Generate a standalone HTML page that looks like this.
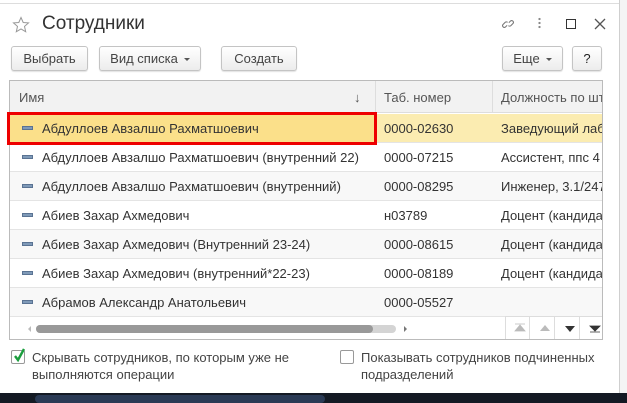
<!DOCTYPE html>
<html><head><meta charset="utf-8"><style>
*{box-sizing:border-box;margin:0;padding:0}
body{width:627px;height:403px;overflow:hidden;background:#fff;font-family:"Liberation Sans",Arial,sans-serif;position:relative;color:#333}
.bgr{position:absolute;left:619px;top:0;width:8px;height:393px;background:#f4f4f4;border-left:1px solid #cfcfcf}
.bot{position:absolute;left:0;top:393px;width:627px;height:10px;background:#141a24}
.bot i{position:absolute;left:35px;top:2px;width:290px;height:8px;background:#2a3a55;border-radius:6px}
.win{position:absolute;left:0;top:3px;width:619px;height:390px;background:#fff;border-top:1px solid #ddd}
.a{position:absolute}
.title{left:42px;top:9px;font-size:19px;color:#333}
.btn{position:absolute;top:46px;height:25px;border:1px solid #c4c4c4;border-radius:3px;background:linear-gradient(#fff,#ececec);font-size:13px;color:#444;text-align:center;line-height:23px;box-shadow:0 1px 1px rgba(0,0,0,.12)}
.tri{display:inline-block;border-left:3px solid transparent;border-right:3px solid transparent;border-top:3px solid #555;vertical-align:middle;margin-left:6px}
.tbl{position:absolute;left:9px;top:80px;width:594px;height:260px;border:1px solid #bbb;overflow:hidden}
.hdr{position:absolute;left:0;top:0;width:594px;height:32px;background:#f2f2f2;border-bottom:1px solid #ddd;font-size:13px;color:#555}
.hdr span{position:absolute;top:9px}
.vl{position:absolute;top:0;width:1px;height:32px;background:#ddd}
.row{position:absolute;left:0;width:594px;height:29px;border-bottom:1px solid #e4e4e4;font-size:13px;color:#333}
.row span{position:absolute;top:7px;white-space:nowrap}
.row i{position:absolute;left:12px;top:12px;width:11px;height:4px;background:#7f9ab8;border:1px solid #5a7393}
.sel{background:#fbecb1}
.sel .c1{position:absolute;left:0;top:0;width:365px;height:29px;background:#fbe08a}
.red{position:absolute;left:7px;top:112px;width:370px;height:33px;border:3px solid #e00}
.cb{position:absolute;width:14px;height:14px;border:1px solid #999;border-radius:2px;background:#fff}
.lbl{position:absolute;font-size:13px;color:#444;line-height:17px}
</style></head><body>
<div class="bgr"></div>
<div class="bot"><i></i></div>
<div class="win">
<svg class="a" style="left:12px;top:12px" width="18" height="18" viewBox="0 0 18 18"><path d="M9 1.5l2.2 5 5.3.4-4 3.5 1.2 5.3L9 12.9 4.3 15.7 5.5 10.4 1.5 6.9l5.3-.4z" fill="none" stroke="#999" stroke-width="1"/></svg>
<div class="a title">Сотрудники</div>
<svg class="a" style="left:501px;top:13px" width="14" height="14" viewBox="0 0 16 16"><g fill="none" stroke="#777" stroke-width="1.2"><path d="M7 9.5l-2 2a2 2 0 0 1-2.8-2.8l2.5-2.5a2 2 0 0 1 2.8 0"/><path d="M9 6.5l2-2a2 2 0 0 1 2.8 2.8l-2.5 2.5a2 2 0 0 1-2.8 0"/></g></svg>
<div class="a" style="left:538px;top:13px;width:3px;height:12px;background:radial-gradient(circle,#888 1px,transparent 1.3px) 0 0/3px 4px"></div>
<div class="a" style="left:566px;top:15px;width:10px;height:10px;border:1.5px solid #333"></div>
<svg class="a" style="left:594px;top:14px" width="12" height="12"><path d="M1 1L11 11M11 1L1 11" stroke="#555" stroke-width="1.3"/></svg>
</div>
<div class="btn" style="left:11px;width:77px">Выбрать</div>
<div class="btn" style="left:99px;width:102px">Вид списка<span class="tri"></span></div>
<div class="btn" style="left:221px;width:76px">Создать</div>
<div class="btn" style="left:502px;width:61px">Еще<span class="tri"></span></div>
<div class="btn" style="left:572px;width:30px;color:#222">?</div>
<div class="tbl">
<div class="hdr"><span style="left:9px">Имя</span><span style="left:344px">↓</span><div class="vl" style="left:365px"></div><span style="left:374px">Таб. номер</span><div class="vl" style="left:482px"></div><span style="left:491px;white-space:nowrap">Должность по шта</span></div>
<div class="row sel" style="top:33px"><div class="c1"></div><i></i><span style="left:32px">Абдуллоев Авзалшо Рахматшоевич</span><span style="left:374px">0000-02630</span><span style="left:491px">Заведующий лаб</span></div>
<div class="row" style="top:62px"><i></i><span style="left:32px">Абдуллоев Авзалшо Рахматшоевич (внутренний 22)</span><span style="left:374px">0000-07215</span><span style="left:491px">Ассистент, ппс 4</span></div>
<div class="row" style="top:91px;background:#f8f8f8"><i></i><span style="left:32px">Абдуллоев Авзалшо Рахматшоевич (внутренний)</span><span style="left:374px">0000-08295</span><span style="left:491px">Инженер, 3.1/247</span></div>
<div class="row" style="top:120px"><i></i><span style="left:32px">Абиев Захар Ахмедович</span><span style="left:374px">н03789</span><span style="left:491px">Доцент (кандида</span></div>
<div class="row" style="top:149px;background:#f8f8f8"><i></i><span style="left:32px">Абиев Захар Ахмедович (Внутренний 23-24)</span><span style="left:374px">0000-08615</span><span style="left:491px">Доцент (кандида</span></div>
<div class="row" style="top:178px"><i></i><span style="left:32px">Абиев Захар Ахмедович (внутренний*22-23)</span><span style="left:374px">0000-08189</span><span style="left:491px">Доцент (кандида</span></div>
<div class="row" style="top:207px;background:#f8f8f8"><i></i><span style="left:32px">Абрамов Александр Анатольевич</span><span style="left:374px">0000-05527</span></div>
<div class="a" style="left:18px;top:245px;border-right:3px solid #bbb;border-top:3px solid transparent;border-bottom:3px solid transparent"></div>
<div class="a" style="left:26px;top:244px;width:360px;height:8px;background:#d4d4d4;border-radius:4px"></div>
<div class="a" style="left:26px;top:244px;width:337px;height:8px;background:#999;border-radius:4px"></div>
<div class="a" style="left:394px;top:245px;border-left:3px solid #777;border-top:3px solid transparent;border-bottom:3px solid transparent"></div>
<div class="a" style="left:495px;top:235px;width:99px;height:25px;border-left:1px solid #ddd;border-top:1px solid #ddd"></div>
<div class="a" style="left:519px;top:236px;width:1px;height:24px;background:#ddd"></div>
<div class="a" style="left:544px;top:236px;width:1px;height:24px;background:#ddd"></div>
<div class="a" style="left:569px;top:236px;width:1px;height:24px;background:#ddd"></div>
<svg class="a" style="left:502px;top:242px" width="90" height="10"><path d="M3 1h10M8 2l-5 6h10z" fill="#bbb" stroke="#bbb" stroke-width=".8"/><path d="M28 8h10l-5-6z" fill="#bbb"/><path d="M53 3h10l-5 6z" fill="#333"/><path d="M78 3h10l-5 5zM78 9h10" fill="#333" stroke="#333" stroke-width=".8"/></svg>
</div>
<div class="red"></div>
<div class="cb" style="left:11px;top:350px"></div>
<svg class="a" style="left:12px;top:347px" width="14" height="16"><path d="M3 9l3 4L12 2" fill="none" stroke="#1b9e3e" stroke-width="2.4"/></svg>
<div class="lbl" style="left:32px;top:349px">Скрывать сотрудников, по которым уже не<br>выполняются операции</div>
<div class="cb" style="left:340px;top:350px"></div>
<div class="lbl" style="left:361px;top:349px">Показывать сотрудников подчиненных<br>подразделений</div>
</body></html>
